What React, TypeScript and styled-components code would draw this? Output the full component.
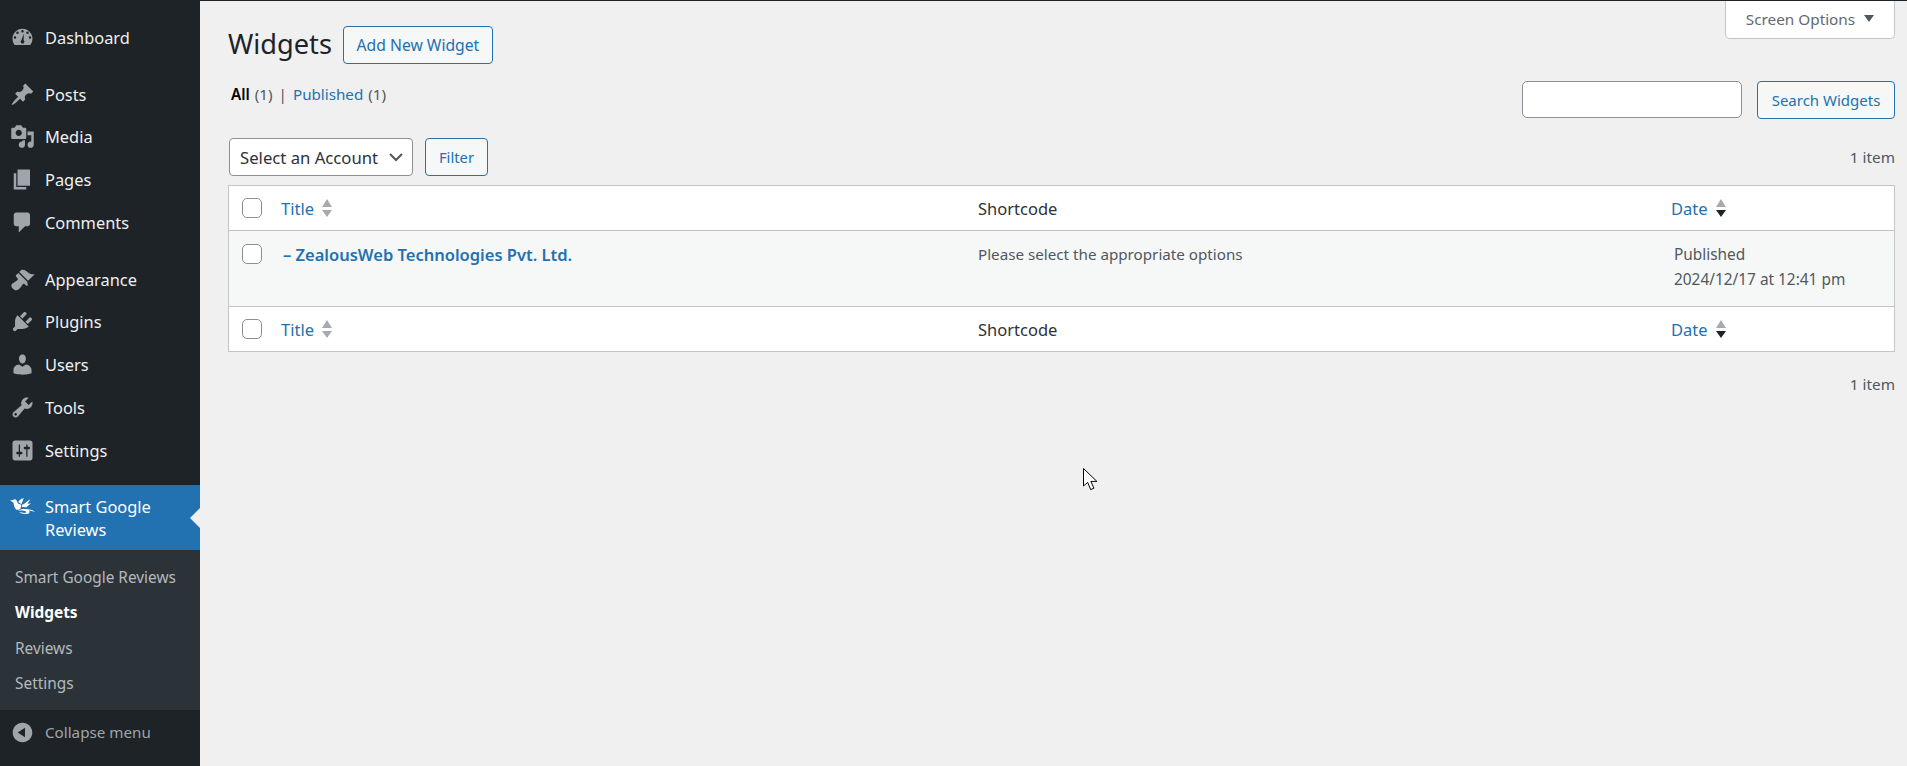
import { createGlobalStyle, styled } from "styled-components";

const GlobalStyle = createGlobalStyle`
  html, body {
    margin: 0;
    padding: 0;
    height: 100%;
    background: #f0f0f1;
    overflow: hidden;
    font-family: "Noto Sans", "Open Sans", "Liberation Sans", sans-serif;
    color: #3c434a;
  }
  * {
    box-sizing: border-box;
  }
`;

const Page = styled.div`
  position: relative;
  display: flex;
  height: 766px;
  border-top: 1px solid #1d2327;
`;

const Sidebar = styled.nav`
  width: 200px;
  flex: none;
  background: #1d2327;
  padding-top: 15px;
  display: flex;
  flex-direction: column;
`;

const MenuGroup = styled.div<{ $gap: number }>`
  margin-bottom: ${(p) => p.$gap}px;
`;

const MenuItem = styled.a`
  display: flex;
  align-items: center;
  gap: 10px;
  height: 42.7px;
  padding-left: 10px;
  color: #f0f0f1;
  font-size: 16.4px;
`;

const MenuIcon = styled.svg`
  width: 25px;
  height: 25px;
  flex: none;
  fill: #a0a5aa;
`;

const ActiveItem = styled.a`
  position: relative;
  display: flex;
  height: 65px;
  padding: 11px 0 0 10px;
  gap: 10px;
  background: #2271b1;
  color: #fff;
  font-size: 16.4px;
  line-height: 22.75px;
  &::after {
    content: "";
    position: absolute;
    right: 0;
    top: 23px;
    border: 10px solid transparent;
    border-right-color: #f0f0f1;
  }
`;

const BirdIcon = styled.svg`
  width: 25px;
  height: 18px;
  flex: none;
  margin-top: 2px;
  fill: #fff;
`;

const Submenu = styled.div`
  background: #2c3338;
  padding: 10px 0 9px;
`;

const SubItem = styled.a<{ $current?: boolean }>`
  display: flex;
  align-items: center;
  height: 35.25px;
  padding-left: 15px;
  font-size: 15.4px;
  color: ${(p) => (p.$current ? "#fff" : "#b4b9be")};
  font-weight: ${(p) => (p.$current ? 700 : 400)};
`;

const Collapse = styled.div`
  display: flex;
  align-items: center;
  gap: 10px;
  height: 44px;
  padding-left: 10px;
  color: #a0a5aa;
  font-size: 15.2px;
`;

const Main = styled.main`
  flex: 1;
  min-width: 0;
  padding: 0 12px 0 28px;
`;

const HeadRow = styled.div`
  display: flex;
  justify-content: space-between;
  align-items: flex-start;
  height: 63px;
`;

const TitleGroup = styled.div`
  display: flex;
  align-items: center;
  gap: 11px;
  margin-top: 25px;
`;

const Heading = styled.h1`
  margin: -1px 0 1px;
  font-size: 27.2px;
  font-weight: 400;
  line-height: 38px;
  color: #1d2327;
`;

const OutlineButton = styled.button<{ $width: number; $size: number }>`
  width: ${(p) => p.$width}px;
  height: 38px;
  padding: 0;
  background: #f6f7f7;
  border: 1px solid #2271b1;
  border-radius: 4px;
  color: #2271b1;
  font-family: inherit;
  font-size: ${(p) => p.$size}px;
`;

const ScreenTab = styled.button`
  display: flex;
  align-items: center;
  justify-content: center;
  gap: 9px;
  width: 170px;
  height: 38px;
  padding: 0 0 2px;
  background: #fff;
  border: 1px solid #c3c4c7;
  border-top: none;
  border-radius: 0 0 5px 5px;
  color: #646970;
  font-family: inherit;
  font-size: 15.3px;
`;

const TabArrow = styled.span`
  border: 5.5px solid transparent;
  border-bottom: none;
  border-top: 7px solid #50575e;
`;

const FilterRow = styled.div`
  display: flex;
  justify-content: space-between;
  align-items: flex-start;
  margin-top: 17px;
`;

const Views = styled.div`
  display: flex;
  gap: 6px;
  margin: 3px 0 0 3px;
  font-size: 15.2px;
  line-height: 20px;
  color: #50575e;
  word-spacing: 1px;
`;

const ViewCurrent = styled.b`
  color: #000;
  font-weight: 600;
`;

const ViewLink = styled.a`
  color: #2271b1;
`;

const SearchBox = styled.div`
  display: flex;
  gap: 15px;
`;

const SearchInput = styled.input`
  width: 220px;
  height: 37px;
  background: #fff;
  border: 1px solid #8c8f94;
  border-radius: 5px;
`;

const Tablenav = styled.div`
  display: flex;
  justify-content: space-between;
  align-items: center;
  height: 38px;
  margin-top: 19px;
  padding-left: 1px;
`;

const Actions = styled.div`
  display: flex;
  gap: 12px;
`;

const SelectWrap = styled.div`
  position: relative;
  width: 184px;
`;

const AccountSelect = styled.select`
  width: 100%;
  height: 38px;
  padding: 0 0 0 10px;
  appearance: none;
  background: #fff;
  border: 1px solid #8c8f94;
  border-radius: 4px;
  color: #2c3338;
  font-family: inherit;
  font-size: 16.7px;
`;

const Chevron = styled.svg`
  position: absolute;
  right: 9px;
  top: 11px;
  width: 16px;
  height: 16px;
  fill: none;
  stroke: #50575e;
  stroke-width: 2;
  pointer-events: none;
`;

const Count = styled.span`
  font-size: 15.3px;
  color: #50575e;
`;

const BottomCount = styled.div`
  text-align: right;
  margin-top: 22px;
  line-height: 20px;
`;

const Table = styled.table`
  width: 100%;
  margin-top: 9px;
  table-layout: fixed;
  border-collapse: separate;
  border-spacing: 0;
  background: #fff;
  border: 1px solid #c3c4c7;
`;

const CheckCol = styled.col`
  width: 52px;
`;
const TitleCol = styled.col`
  width: 697px;
`;
const CodeCol = styled.col`
  width: 693px;
`;

const HeadCell = styled.th<{ $top?: boolean }>`
  height: 45px;
  padding: 0;
  text-align: left;
  font-weight: 400;
  font-size: 16.5px;
  color: #2c3338;
  ${(p) => (p.$top ? "border-bottom: 1px solid #c3c4c7;" : "border-top: 1px solid #c3c4c7;")}
`;

const BodyRow = styled.tr`
  background: #f6f7f7;
`;

const BodyCell = styled.td`
  height: 75px;
  padding: 11px 0 0;
  vertical-align: top;
  font-size: 15.2px;
  line-height: 25px;
  color: #50575e;
`;

const CheckBodyCell = styled(BodyCell)`
  padding-top: 13px;
`;

const Check = styled.input.attrs({ type: "checkbox" })`
  display: block;
  appearance: none;
  width: 20px;
  height: 20px;
  margin: 0 0 0 13px;
  background: #fff;
  border: 1px solid #8c8f94;
  border-radius: 5px;
`;

const SortLink = styled.a`
  display: inline-flex;
  align-items: center;
  gap: 8px;
  color: #2271b1;
`;

const SortIcon = styled.svg`
  width: 10px;
  height: 18px;
  flex: none;
`;

const RowTitle = styled.a`
  display: block;
  padding-left: 2px;
  color: #2271b1;
  font-size: 16.5px;
  font-weight: 600;
`;

const DateText = styled.div`
  padding-left: 3px;
  font-size: 15.4px;
`;

const Pointer = styled.svg`
  position: absolute;
  left: 1083px;
  top: 467px;
  width: 16px;
  height: 25px;
`;

const icons: Record<string, string> = {
  dashboard:
    "M3.76 16h12.48A7.97 7.97 0 0 0 18 11c0-4.42-3.58-8-8-8s-8 3.58-8 8c0 1.89.66 3.63 1.76 5zM10 4a1 1 0 1 1 0 2 1 1 0 0 1 0-2zM6 5.2a1 1 0 1 1 0 2 1 1 0 0 1 0-2zM14 5.2a1 1 0 1 1 0 2 1 1 0 0 1 0-2zM4 9a1 1 0 1 1 0 2 1 1 0 0 1 0-2zM16 9a1 1 0 1 1 0 2 1 1 0 0 1 0-2zM11 7l-.1 5.1a1.5 1.5 0 1 1-1.8 0z",
  posts:
    "M10.44 3.02l1.82-1.82 6.36 6.35-1.83 1.82c-1.05-.68-2.48-.57-3.41.36l-.75.75c-.92.93-1.04 2.35-.35 3.41l-1.83 1.82-2.41-2.41-2.8 2.79c-.42.42-3.38 2.71-3.8 2.29s1.86-3.39 2.28-3.81l2.79-2.79L4.1 9.36l1.83-1.82c1.05.69 2.48.57 3.4-.36l.75-.75c.93-.92 1.05-2.35.36-3.41z",
  media:
    "M13 11V4c0-.55-.45-1-1-1h-1.67L9 1H5L3.67 3H2c-.55 0-1 .45-1 1v7c0 .55.45 1 1 1h10c.55 0 1-.45 1-1zM7 4.5c1.38 0 2.5 1.12 2.5 2.5S8.38 9.5 7 9.5 4.5 8.38 4.5 7 5.62 4.5 7 4.5zM14 6h5v10.5c0 1.38-1.12 2.5-2.5 2.5S14 17.88 14 16.5s1.12-2.5 2.5-2.5c.17 0 .34.02.5.05V9h-3V6zm-4 8.05V13h2v3.5c0 1.38-1.12 2.5-2.5 2.5S7 17.88 7 16.5 8.12 14 9.5 14c.17 0 .34.02.5.05z",
  pages: "M6 15V2h10v13H6zm-1 1h8v2H3V5h2v11z",
  comments:
    "M5 2h9c1.1 0 2 .9 2 2v7c0 1.1-.9 2-2 2h-2l-5 5v-5H5c-1.1 0-2-.9-2-2V4c0-1.1.9-2 2-2z",
  appearance:
    "M14.48 11.06L7.41 3.99l1.5-1.5c.5-.56 2.3-.47 3.51.32 1.21.8 1.43 1.28 2.91 2.1 1.18.64 2.45 1.26 4.45.85zm-.71.71L6.7 4.7 4.93 6.47c-.39.39-.39 1.02 0 1.41l1.06 1.06c.39.39.39 1.03 0 1.42-.6.6-1.43 1.11-2.21 1.69-.35.26-.7.53-1.01.84C1.43 13.23.76 14.72 1.2 15.8c.31.77 1.96 2.41 2.72 2.72 1.08.44 2.57-.23 3.91-1.57.31-.31.58-.66.85-1.02.57-.77 1.08-1.6 1.69-2.2.39-.39 1-.39 1.4 0l1.07 1.06c.39.39 1.02.39 1.41 0z",
  plugins:
    "M13.11 4.36L9.87 7.6 8 5.73l3.24-3.24c.35-.34 1.05-.2 1.56.32.52.51.66 1.21.31 1.55zm-8 1.77l.91-1.12 9.01 9.01-1.19.84c-.71.71-2.63 1.16-3.82 1.16H6.14L4.9 17.26c-.59.59-1.54.59-2.12 0-.59-.58-.59-1.53 0-2.12l1.24-1.24v-3.88c0-1.13.4-3.19 1.09-3.89zm7.26 3.97l3.24-3.24c.34-.35 1.04-.21 1.55.31.52.51.66 1.21.31 1.55l-3.24 3.25z",
  users:
    "M10 9.25c-2.27 0-2.73-3.44-2.73-3.44C7 4.02 7.82 2 9.97 2c2.16 0 2.98 2.02 2.71 3.81 0 0-.41 3.44-2.68 3.44zm0 2.57L12.72 10c2.39 0 4.52 2.33 4.52 4.53v2.49s-3.65 1.13-7.24 1.13c-3.65 0-7.24-1.13-7.24-1.13v-2.49c0-2.25 1.94-4.48 4.47-4.48z",
  tools:
    "M16.68 9.77c-1.34 1.34-3.3 1.67-4.95.99l-5.41 6.52c-.99.99-2.59.99-3.58 0s-.99-2.59 0-3.57l6.52-5.42c-.68-1.65-.35-3.61.99-4.95 1.28-1.28 3.12-1.62 4.72-1.06l-2.89 2.89 2.82 2.82 2.86-2.87c.53 1.58.18 3.39-1.08 4.65zM3.81 16.21c.4.39 1.04.39 1.43 0 .4-.4.4-1.04 0-1.43-.39-.4-1.03-.4-1.43 0-.39.39-.39 1.03 0 1.43z",
  settings:
    "M18 16V4c0-1.1-.9-2-2-2H4c-1.1 0-2 .9-2 2v12c0 1.1.9 2 2 2h12c1.1 0 2-.9 2-2zM8 11h1c.55 0 1 .45 1 1s-.45 1-1 1H8v1.5c0 .28-.22.5-.5.5s-.5-.22-.5-.5V13H6c-.55 0-1-.45-1-1s.45-1 1-1h1V5.5c0-.28.22-.5.5-.5s.5.22.5.5V11zm5-2h-1c-.55 0-1-.45-1-1s.45-1 1-1h1V5.5c0-.28.22-.5.5-.5s.5.22.5.5V7h1c.55 0 1 .45 1 1s-.45 1-1 1h-1v5.5c0 .28-.22.5-.5.5s-.5-.22-.5-.5V9z",
  collapse:
    "M10 2.16c4.33 0 7.84 3.51 7.84 7.84s-3.51 7.84-7.84 7.84S2.16 14.33 2.16 10 5.71 2.16 10 2.16zm2 11.72V6.12L6.18 9.97z",
};

const menuGroups: { gap: number; items: string[][] }[] = [
  { gap: 14, items: [["dashboard", "Dashboard"]] },
  {
    gap: 14.5,
    items: [
      ["posts", "Posts"],
      ["media", "Media"],
      ["pages", "Pages"],
      ["comments", "Comments"],
    ],
  },
  {
    gap: 13.7,
    items: [
      ["appearance", "Appearance"],
      ["plugins", "Plugins"],
      ["users", "Users"],
      ["tools", "Tools"],
      ["settings", "Settings"],
    ],
  },
];

function Dashicon({ name }: { name: string }) {
  return (
    <MenuIcon viewBox="0 0 20 20">
      <path fillRule="evenodd" d={icons[name]} />
    </MenuIcon>
  );
}

function Bird() {
  return (
    <BirdIcon viewBox="0 0 25 18">
      <path d="M0 2.6l3-.6C4 1 5.6 1.2 6.6 2.4L8 5.4l3.2 1.4-.4 3.2c-.8 1.8-3.4 2.4-5 1.2L4.2 8.4 3.4 4.6z" />
      <path d="M8.4 4l3 2.2L13.8 0l-1.6.8-.4-.4L8.8 3zM12.2 6.6l1.4-.4L20.4 1l-3 5 3.8-.8-3.8 3-.8 1-3.8-.2-1-.6z" />
      <path d="M7.6 12.6c3.4-2 8.6-2.2 13.2-.8 2 .6 3.8 1.5 3.8 2.2-1.8-.7-3.6-1.3-5.8-1.5 1.4 1.2 1 3.1-1.6 3.5-3.4.5-6.8-.6-8-1.9l5.6.8c1.1.1 1.7-.4 1.3-1.2-.4-.8-4-1.4-8.5-1.1z" />
    </BirdIcon>
  );
}

function Sort({ active }: { active?: boolean }) {
  return (
    <SortIcon viewBox="0 0 10 18">
      <path d="M5 0l5 8H0z" fill="#a7aaad" />
      <path d="M0 11h10l-5 7z" fill={active ? "#1d2327" : "#a7aaad"} />
    </SortIcon>
  );
}

function ColumnHeads({ top }: { top?: boolean }) {
  return (
    <tr>
      <HeadCell $top={top}>
        <Check />
      </HeadCell>
      <HeadCell $top={top}>
        <SortLink>
          Title <Sort />
        </SortLink>
      </HeadCell>
      <HeadCell $top={top}>Shortcode</HeadCell>
      <HeadCell $top={top}>
        <SortLink>
          Date <Sort active />
        </SortLink>
      </HeadCell>
    </tr>
  );
}

function App() {
  return (
    <>
      <GlobalStyle />
      <Page>
        <Sidebar>
          {menuGroups.map((group, i) => (
            <MenuGroup key={i} $gap={group.gap}>
              {group.items.map(([icon, label]) => (
                <MenuItem key={label}>
                  <Dashicon name={icon} />
                  {label}
                </MenuItem>
              ))}
            </MenuGroup>
          ))}
          <ActiveItem>
            <Bird />
            <span>
              Smart Google
              <br />
              Reviews
            </span>
          </ActiveItem>
          <Submenu>
            <SubItem>Smart Google Reviews</SubItem>
            <SubItem $current>Widgets</SubItem>
            <SubItem>Reviews</SubItem>
            <SubItem>Settings</SubItem>
          </Submenu>
          <Collapse>
            <Dashicon name="collapse" />
            Collapse menu
          </Collapse>
        </Sidebar>
        <Main>
          <HeadRow>
            <TitleGroup>
              <Heading>Widgets</Heading>
              <OutlineButton $width={150} $size={15.7}>
                Add New Widget
              </OutlineButton>
            </TitleGroup>
            <ScreenTab>
              Screen Options
              <TabArrow />
            </ScreenTab>
          </HeadRow>
          <FilterRow>
            <Views>
              <span>
                <ViewCurrent>All</ViewCurrent> (1)
              </span>
              <span>|</span>
              <span>
                <ViewLink>Published</ViewLink> (1)
              </span>
            </Views>
            <SearchBox>
              <SearchInput />
              <OutlineButton $width={138} $size={15}>
                Search Widgets
              </OutlineButton>
            </SearchBox>
          </FilterRow>
          <Tablenav>
            <Actions>
              <SelectWrap>
                <AccountSelect>
                  <option>Select an Account</option>
                </AccountSelect>
                <Chevron viewBox="0 0 16 16">
                  <path d="M2 5l6 6 6-6" />
                </Chevron>
              </SelectWrap>
              <OutlineButton $width={63} $size={14.8}>
                Filter
              </OutlineButton>
            </Actions>
            <Count>1 item</Count>
          </Tablenav>
          <Table>
            <colgroup>
              <CheckCol />
              <TitleCol />
              <CodeCol />
              <col />
            </colgroup>
            <thead>
              <ColumnHeads top />
            </thead>
            <tbody>
              <BodyRow>
                <CheckBodyCell>
                  <Check />
                </CheckBodyCell>
                <BodyCell>
                  <RowTitle>– ZealousWeb Technologies Pvt. Ltd.</RowTitle>
                </BodyCell>
                <BodyCell>Please select the appropriate options</BodyCell>
                <BodyCell>
                  <DateText>
                    Published
                    <br />
                    2024/12/17 at 12:41 pm
                  </DateText>
                </BodyCell>
              </BodyRow>
            </tbody>
            <tfoot>
              <ColumnHeads />
            </tfoot>
          </Table>
          <BottomCount>
            <Count>1 item</Count>
          </BottomCount>
        </Main>
        <Pointer viewBox="0 0 16 25">
          <path d="M.5.5v17.5l4.2-3.6 3 7.2 3.2-1.4-3-6.8h6z" fill="#fff" stroke="#000" strokeWidth="1" />
        </Pointer>
      </Page>
    </>
  );
}

export default App;
